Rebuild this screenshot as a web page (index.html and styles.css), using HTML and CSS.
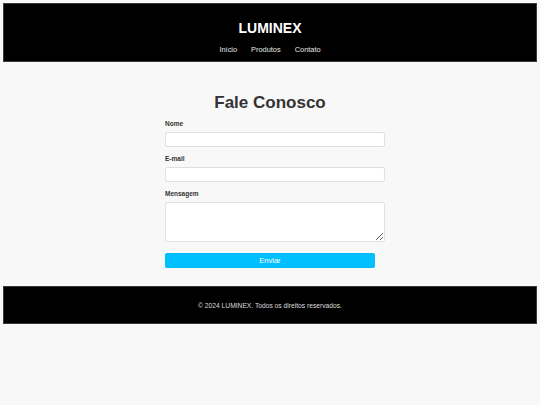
FILE: index.html
```html
<!DOCTYPE html>
<html lang="pt-BR">
<head>
    <meta charset="UTF-8">
    <meta name="viewport" content="width=device-width, initial-scale=1.0">
    <title>LUMINEX - Contato</title>
    <link rel="stylesheet" href="styles.css">
</head>
<body>
    <header class="site-header">
        <h1 class="logo">LUMINEX</h1>
        <nav class="nav">
            <a href="#">Início</a>
            <a href="#">Produtos</a>
            <a href="#">Contato</a>
        </nav>
    </header>

    <main class="contact">
        <h2 class="contact-title">Fale Conosco</h2>
        <form class="contact-form">
            <label for="nome">Nome</label>
            <input type="text" id="nome">

            <label for="email">E-mail</label>
            <input type="email" id="email">

            <label for="mensagem">Mensagem</label>
            <textarea id="mensagem"></textarea>

            <button type="submit">Enviar</button>
        </form>
    </main>

    <footer class="site-footer">
        <p>&copy; 2024 LUMINEX. Todos os direitos reservados.</p>
    </footer>
</body>
</html>
```

FILE: styles.css
```css
body {
    font-family: "Liberation Sans", Arial, sans-serif;
    margin: 3px;
    background-color: #f8f8f8;
    color: #333;
}
.site-header {
    background-color: #000;
    border: 1px solid #3a3a3a;
    padding: 16px 0 6px;
    text-align: center;
}
.logo {
    margin: 0 0 9px;
    font-size: 14px;
    line-height: 16px;
    color: #fff;
}
.nav {
    display: flex;
    justify-content: center;
    gap: 14px;
    font-size: 7.4px;
    line-height: 10px;
}
.nav a {
    color: #e8e8e8;
    text-decoration: none;
}
.contact {
    padding: 31px 0 18px;
}
.contact-title {
    margin: 0 0 7px;
    font-size: 17px;
    line-height: 20px;
    text-align: center;
    color: #333;
}
.contact-form {
    width: 210px;
    margin: 0 auto;
    display: flex;
    flex-direction: column;
    align-items: flex-start;
}
.contact-form label {
    font-size: 6.5px;
    line-height: 8px;
    font-weight: bold;
    margin-bottom: 4px;
}
.contact-form input,
.contact-form textarea {
    width: 100%;
    height: 13px;
    padding: 0 4px;
    margin: 0 0 8px;
    border: 1px solid #e0e0e0;
    border-radius: 2px;
    background-color: #fff;
    font-family: inherit;
    font-size: 7px;
}
.contact-form textarea {
    height: 38px;
    margin-bottom: 11px;
}
.contact-form button {
    width: 210px;
    height: 15px;
    padding: 0;
    border: none;
    border-radius: 2px;
    background-color: #00bfff;
    color: #fff;
    font-family: inherit;
    font-size: 7.5px;
    cursor: pointer;
}
.site-footer {
    background-color: #000;
    border: 1px solid #3a3a3a;
    height: 36px;
    display: flex;
    align-items: center;
    justify-content: center;
}
.site-footer p {
    margin: 0;
    font-size: 6.7px;
    color: #ddd;
}
```
